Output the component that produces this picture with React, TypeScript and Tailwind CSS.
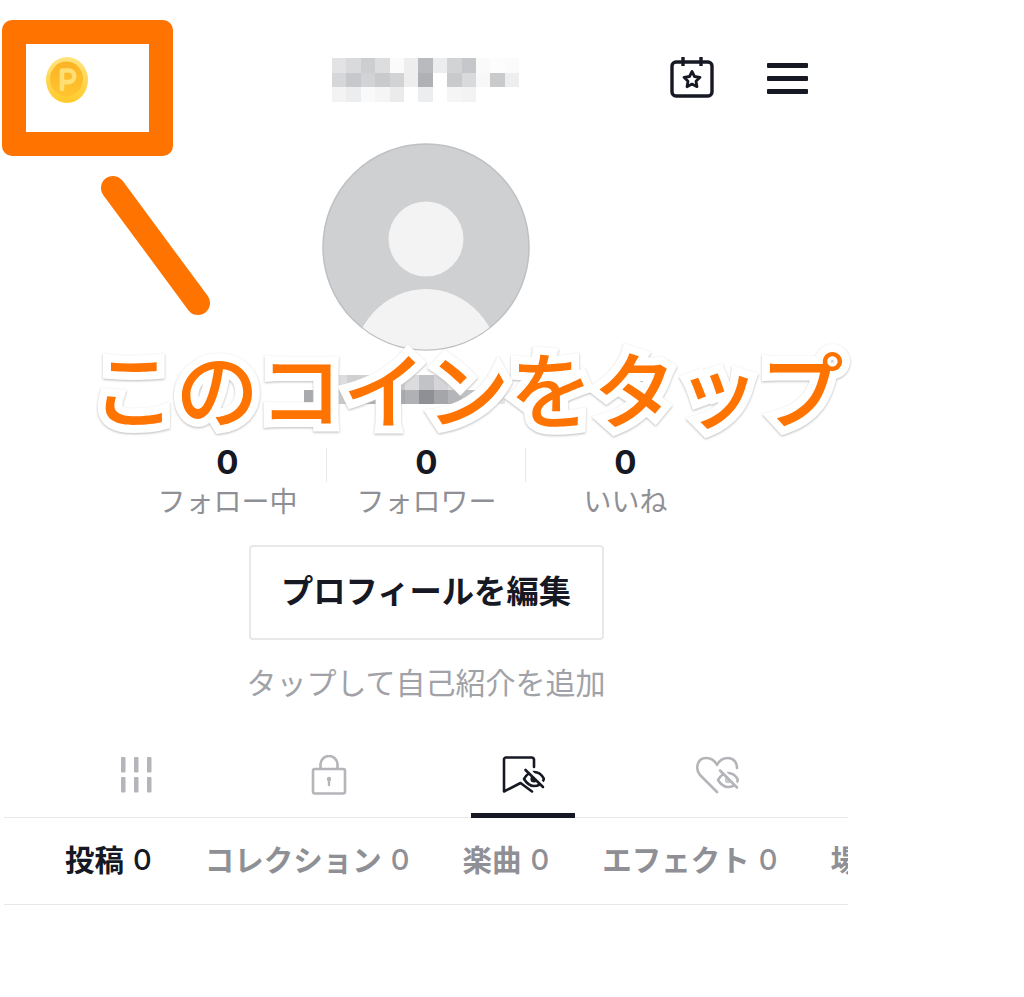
import React from "react";

const jp = "font-['Inter','Noto_Sans_CJK_JP',sans-serif]";

const titleBlur = [
  ["#e3e3e5", "#d9dadb", "#cdced0", "#dcddde", "#fbfbfb", "#eeeeef", "#b9babd", "#ecedee", "#d2d3d5", "#c6c7ca", "#fafafa", "#fdfdfd", "#fbfbfb"],
  ["#d6d7d9", "#c7c8cb", "#d2d3d5", "#c9cacc", "#d2d3d5", "#eeeeef", "#b0b1b5", "#ffffff", "#c9cacc", "#d9dadc", "#f8f8f8", "#c9cacc", "#eeeeef"],
  ["#f3f3f4", "#ecedee", "#f9f9f9", "#f5f5f6", "#ebebec", "#ffffff", "#ecedef", "#ffffff", "#f5f5f6", "#f3f3f4", "#ffffff", "#ffffff", "#ffffff"],
];

const nameBlur = [
  ["#ffffff", "#ffffff", "#dddddf", "#cfd0d2", "#d3d4d6", "#e0e0e2", "#c9cacc", "#dcdcde", "#c2c3c6", "#d5d5d7", "#e2e2e4", "#ffffff", "#ffffff", "#ffffff"],
  ["#a9aaae", "#b8b9bc", "#c8c9cb", "#bdbec1", "#ababaf", "#9fa0a4", "#a7a8ac", "#b0b1b5", "#8f9095", "#a5a6aa", "#b4b5b8", "#c1c2c5", "#d0d1d3", "#e5e5e7"],
];

const stats = [
  { n: "0", label: "フォロー中" },
  { n: "0", label: "フォロワー" },
  { n: "0", label: "いいね" },
];

const subTabs = [
  { label: "投稿", n: "0", active: true },
  { label: "コレクション", n: "0" },
  { label: "楽曲", n: "0" },
  { label: "エフェクト", n: "0" },
  { label: "場所", n: "0" },
];

const Coin = () => (
  <svg width="44" height="48" viewBox="0 0 44 48">
    <defs>
      <linearGradient id="coinOuter" x1="0" y1="0" x2="0" y2="1">
        <stop offset="0" stopColor="#ffe47e" />
        <stop offset="1" stopColor="#ffc928" />
      </linearGradient>
      <linearGradient id="coinInner" x1="0" y1="0" x2="0" y2="1">
        <stop offset="0" stopColor="#fcb225" />
        <stop offset="1" stopColor="#ffc530" />
      </linearGradient>
    </defs>
    <ellipse cx="22" cy="24" rx="21" ry="23" fill="url(#coinOuter)" />
    <ellipse cx="21.5" cy="23" rx="16.5" ry="17.500" fill="url(#coinInner)" />
    <path d="M17 33V14.500h6.500a5.800 5.800 0 0 1 0 11.600H17" fill="none" stroke="#ffdf74" strokeWidth="4.6" strokeLinecap="round" strokeLinejoin="round" />
  </svg>
);

const CalendarStar = () => (
  <svg width="44" height="42" viewBox="0 0 44 42" fill="none" stroke="#161823">
    <rect x="2" y="6" width="40" height="34" rx="4" strokeWidth="3.4" />
    <path d="M13 1v9M31 1v9" strokeWidth="3.4" />
    <path d="M22 15.5l2.5 5 5.5.8-4 3.9 1 5.5-5-2.6-5 2.6 1-5.5-4-3.9 5.5-.8z" strokeWidth="2.8" strokeLinejoin="round" />
  </svg>
);

const Avatar = () => (
  <svg width="208" height="208" viewBox="0 0 208 208">
    <defs>
      <clipPath id="avatarClip">
        <circle cx="104" cy="104" r="102.5" />
      </clipPath>
    </defs>
    <circle cx="104" cy="104" r="103" fill="#ced0d2" stroke="#bfc0c3" strokeWidth="1.5" />
    <circle cx="104" cy="96" r="37.5" fill="#f3f3f3" />
    <ellipse cx="104" cy="228" rx="75" ry="82" fill="#f3f3f3" clipPath="url(#avatarClip)" />
  </svg>
);

const GridIcon = () => (
  <svg width="34" height="36" viewBox="0 0 34 36" fill="#b4b5b9">
    <rect x="3" y="0" width="4.5" height="15.5" rx="1" />
    <rect x="16" y="0" width="4.5" height="15.5" rx="1" />
    <rect x="29" y="0" width="4.5" height="15.5" rx="1" />
    <rect x="3" y="20" width="4.5" height="15.5" rx="1" />
    <rect x="16" y="20" width="4.5" height="15.5" rx="1" />
    <rect x="29" y="20" width="4.5" height="15.5" rx="1" />
  </svg>
);

const LockIcon = () => (
  <svg width="36" height="40" viewBox="0 0 36 40" fill="none" stroke="#b4b5b9" strokeWidth="2.6">
    <rect x="2" y="14" width="32" height="24.5" rx="2" />
    <path d="M9.5 14V9.5a8.5 8.5 0 0 1 17 0V14" />
    <circle cx="18" cy="24" r="2.2" fill="#b4b5b9" stroke="none" />
    <path d="M18 25v5" strokeWidth="2.4" strokeLinecap="round" />
  </svg>
);

const BookmarkHidden = () => (
  <svg width="44" height="38" viewBox="0 0 44 38" fill="none" stroke="#161823" strokeWidth="2.6" strokeLinecap="round" strokeLinejoin="round">
    <path d="M33 11V3.500A2.500 2.500 0 0 0 30.500 1.500H5A2 2 0 0 0 3 3.500V35.500L19.500 27L31 35.500" />
    <path d="M23 23c2.500-4.500 6-7 10-7s8 3 10 7c-2 4-6 7-10 7s-7.500-3-10-7z" fill="#ffffff" />
    <circle cx="33" cy="23" r="3.600" fill="#161823" stroke="none" />
    <path d="M26.500 12.500l17 17" stroke="#ffffff" strokeWidth="3.200" />
    <path d="M24.500 14l17.500 17" />
  </svg>
);

const HeartHidden = () => (
  <svg width="44" height="38" viewBox="0 0 44 38" fill="none" stroke="#b4b5b9" strokeWidth="2.6" strokeLinecap="round" strokeLinejoin="round">
    <path d="M22 36L5 19C0 13 2 2 11 2c5 0 9 3 11 7 2-4 6-7 11-7 6 0 9 5 9 10" />
    <path d="M23 24c2.500-4.500 6-7 10-7s8 3 10 7c-2 4-6 7-10 7s-7.500-3-10-7z" fill="#ffffff" />
    <circle cx="33" cy="24" r="3.200" fill="#c9cacd" stroke="none" />
    <path d="M27 13.500l16 16.500" stroke="#ffffff" strokeWidth="3.200" />
    <path d="M25 14.500l17 17" />
  </svg>
);

const iconTabs = [
  { icon: <GridIcon /> },
  { icon: <LockIcon /> },
  { icon: <BookmarkHidden />, active: true },
  { icon: <HeartHidden /> },
];

export default function App() {
  return (
    <div className={`relative h-[997px] w-[1024px] overflow-hidden bg-white text-[#161823] ${jp}`}>
      <div className="flex w-[848px] flex-col">
        {/* Top bar */}
        <div className="flex h-[143px] items-start pt-[56px]">
          <div className="ml-[45px] w-[287px]">
            <Coin />
          </div>
          <div className="mt-[2px] flex w-[338px] flex-col">
            {titleBlur.map((row, i) => (
              <div key={i} className="flex">
                {row.map((c, j) => (
                  <div key={j} className="h-[14.5px] w-[14.4px]" style={{ background: c }} />
                ))}
              </div>
            ))}
          </div>
          <CalendarStar />
          <div className="ml-[53px] mt-[7px] flex w-[41px] flex-col gap-[8.500px]">
            <div className="h-[4.500px] rounded-[1px] bg-[#161823]" />
            <div className="h-[4.500px] rounded-[1px] bg-[#161823]" />
            <div className="h-[4.500px] rounded-[1px] bg-[#161823]" />
          </div>
        </div>

        {/* Avatar */}
        <div className="flex justify-center pl-[4px]">
          <Avatar />
        </div>

        {/* Blurred name */}
        <div className="mt-[24px] flex h-[29px] flex-col pl-[304px]">
          {nameBlur.map((row, i) => (
            <div key={i} className="flex">
              {row.map((c, j) => (
                <div key={j} className="h-[14.5px] w-[14.4px]" style={{ background: c }} />
              ))}
            </div>
          ))}
        </div>

        {/* Stats */}
        <div className="ml-[128px] mt-[39px] flex">
          {stats.map((s, i) => (
            <div key={s.label} className="relative flex w-[199px] flex-col items-center">
              <div className="text-[33px] font-bold leading-[38px]">{s.n}</div>
              <div className="mt-[2px] whitespace-nowrap text-[28px] leading-[38px] text-[#8f9095]">{s.label}</div>
              {i < 2 && <div className="absolute right-0 top-[5px] h-[34px] w-px bg-[#e8e8ea]" />}
            </div>
          ))}
        </div>

        {/* Edit button */}
        <div className="mt-[24px] flex justify-center pl-[4px]">
          <div className="flex h-[95px] w-[355px] items-center justify-center rounded-[4px] border-2 border-[#e8e8e9] text-[32.300px] font-semibold">
            プロフィールを編集
          </div>
        </div>
        <div className="mt-[21px] pl-[4px] text-center text-[30px] leading-[44px] text-[#a1a2a7]">
          タップして自己紹介を追加
        </div>

        {/* Icon tabs */}
        <div className="ml-[4px] mt-[44px] flex h-[69px] border-b border-[#e8e8ea] pl-[34px]">
          {iconTabs.map((t, i) => (
            <div key={i} className="relative flex w-[194px] items-center justify-center pb-[16px]">
              {t.icon}
              {t.active && <div className="absolute bottom-[-1px] h-[5px] w-[104px] bg-[#161823]" />}
            </div>
          ))}
        </div>

        {/* Sub tabs */}
        <div className="ml-[4px] flex h-[87px] items-start gap-[53px] overflow-hidden border-b border-[#e8e8ea] pl-[61px] pt-[20px]">
          {subTabs.map((t) => (
            <div
              key={t.label}
              className={`flex shrink-0 items-center gap-[9px] whitespace-nowrap text-[29.500px] font-semibold leading-[44px] ${t.active ? "text-[#161823]" : "text-[#8f9095]"}`}
            >
              <span>{t.label}</span>
              <span className="text-[29px] font-medium">{t.n}</span>
            </div>
          ))}
        </div>
      </div>

      {/* Annotation overlay */}
      <div className="absolute left-[2px] top-[20px] h-[136px] w-[171px] rounded-[10px] border-[24px] border-[#ff7300]" />
      <svg className="absolute left-0 top-0" width="260" height="340">
        <line x1="113" y1="188" x2="198" y2="303" stroke="#ff7300" strokeWidth="24" strokeLinecap="round" />
      </svg>
      <div className="absolute left-[92px] top-[332px] whitespace-nowrap text-[83.500px] font-medium leading-[120px] text-[#ff7300] [-webkit-text-stroke:16px_#ffffff] [paint-order:stroke_fill] [filter:drop-shadow(0_1px_1px_#bbbbbb)]">
        このコインをタップ
      </div>
    </div>
  );
}
